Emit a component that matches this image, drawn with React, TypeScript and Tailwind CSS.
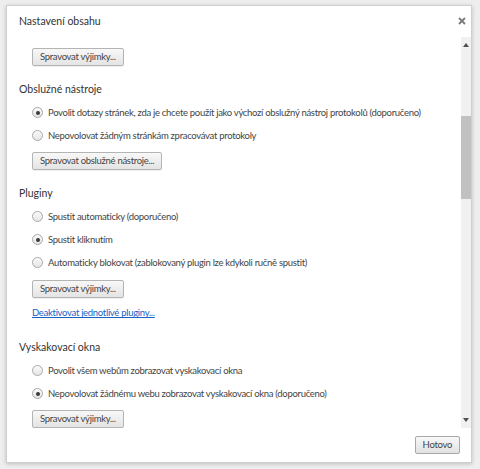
import React from "react";

const font = { fontFamily: 'Lato, "Open Sans", sans-serif' };

function Radio({ checked, label }: { checked?: boolean; label: string }) {
  return (
    <div className="flex h-[23px] items-center pl-[25px]">
      <span className="flex h-[11px] w-[11px] shrink-0 items-center justify-center rounded-full border border-[#a9a9a9] bg-gradient-to-b from-[#fafafa] to-[#e6e6e6]">
        {checked && <span className="h-[4px] w-[4px] rounded-full bg-[#3a3a3a]" />}
      </span>
      <span className="ml-[5px] whitespace-nowrap text-[9.5px] leading-none tracking-[-0.3px] text-[#444]">{label}</span>
    </div>
  );
}

function Btn({ label, cls = "" }: { label: string; cls?: string }) {
  return (
    <div className={"flex pl-[25px] " + cls}>
      <div className="flex h-[18px] items-center rounded-[2px] border border-[#b4b4b4] bg-gradient-to-b from-[#f8f8f8] to-[#e4e4e4] px-[7px] text-[9.5px] leading-none tracking-[-0.3px] text-[#444] shadow-[0_1px_0_rgba(0,0,0,0.06)]">
        {label}
      </div>
    </div>
  );
}

function Heading({ label, cls = "" }: { label: string; cls?: string }) {
  return (
    <div className={"flex h-[22px] items-center pl-[12px] text-[10.5px] leading-none text-[#333] " + cls}>{label}</div>
  );
}

export default function App() {
  return (
    <div className="h-[469px] w-[480px] overflow-hidden bg-[#eeeeee] pl-[6px] pt-[5px]" style={font}>
      <div className="flex h-[458px] w-[466px] flex-col border border-[#cfcfcf] bg-white shadow-[0_1px_4px_rgba(0,0,0,0.2)]">
        <div className="flex h-[30px] shrink-0 items-center justify-between pl-[12px] pr-[5px]">
          <span className="text-[10.5px] leading-none text-[#333]">Nastavení obsahu</span>
          <svg width="8" height="8" viewBox="0 0 8 8" className="mb-[1px]">
            <path d="M1 1L7 7M7 1L1 7" stroke="#7a7a7a" strokeWidth="1.8" />
          </svg>
        </div>
        <div className="flex h-[392px] shrink-0">
          <div className="flex-1 overflow-hidden">
            <Btn label="Spravovat výjimky..." cls="mt-[12px]" />
            <Heading label="Obslužné nástroje" cls="mt-[12px]" />
            <div className="mt-[1px]">
              <Radio checked label="Povolit dotazy stránek, zda je chcete použít jako výchozí obslužný nástroj protokolů (doporučeno)" />
              <Radio label="Nepovolovat žádným stránkám zpracovávat protokoly" />
            </div>
            <Btn label="Spravovat obslužné nástroje..." cls="mt-[5px]" />
            <Heading label="Pluginy" cls="mt-[12px]" />
            <div className="mt-[1px]">
              <Radio label="Spustit automaticky (doporučeno)" />
              <Radio checked label="Spustit kliknutím" />
              <Radio label="Automaticky blokovat (zablokovaný plugin lze kdykoli ručně spustit)" />
            </div>
            <Btn label="Spravovat výjimky..." cls="mt-[6px]" />
            <div className="mt-[6px] flex h-[18px] items-center pl-[25px]">
              <span className="text-[9.5px] leading-none tracking-[-0.3px] text-[#1a5fc4] underline">Deaktivovat jednotlivé pluginy...</span>
            </div>
            <Heading label="Vyskakovací okna" cls="mt-[14px]" />
            <div className="mt-[1px]">
              <Radio label="Povolit všem webům zobrazovat vyskakovací okna" />
              <Radio checked label="Nepovolovat žádnému webu zobrazovat vyskakovací okna (doporučeno)" />
            </div>
            <Btn label="Spravovat výjimky..." cls="mt-[5px]" />
          </div>
          <div className="mt-[1px] flex w-[10px] flex-col items-center bg-[#f1f1f1]">
            <svg width="6" height="4" viewBox="0 0 6 4" className="mt-[6px]">
              <path d="M0 4L3 0L6 4Z" fill="#505050" />
            </svg>
            <div className="mt-[69px] h-[83px] w-[10px] bg-[#c1c1c1]" />
            <div className="flex-1" />
            <svg width="6" height="4" viewBox="0 0 6 4" className="mb-[6px]">
              <path d="M0 0L6 0L3 4Z" fill="#505050" />
            </svg>
          </div>
        </div>
        <div className="flex flex-1 items-start justify-end pr-[11px] pt-[8px]">
          <div className="flex h-[18px] items-center rounded-[2px] border border-[#a8a8a8] bg-gradient-to-b from-[#f8f8f8] to-[#e2e2e2] px-[7px] text-[9.5px] leading-none tracking-[-0.3px] text-[#444]">
            Hotovo
          </div>
        </div>
      </div>
    </div>
  );
}
